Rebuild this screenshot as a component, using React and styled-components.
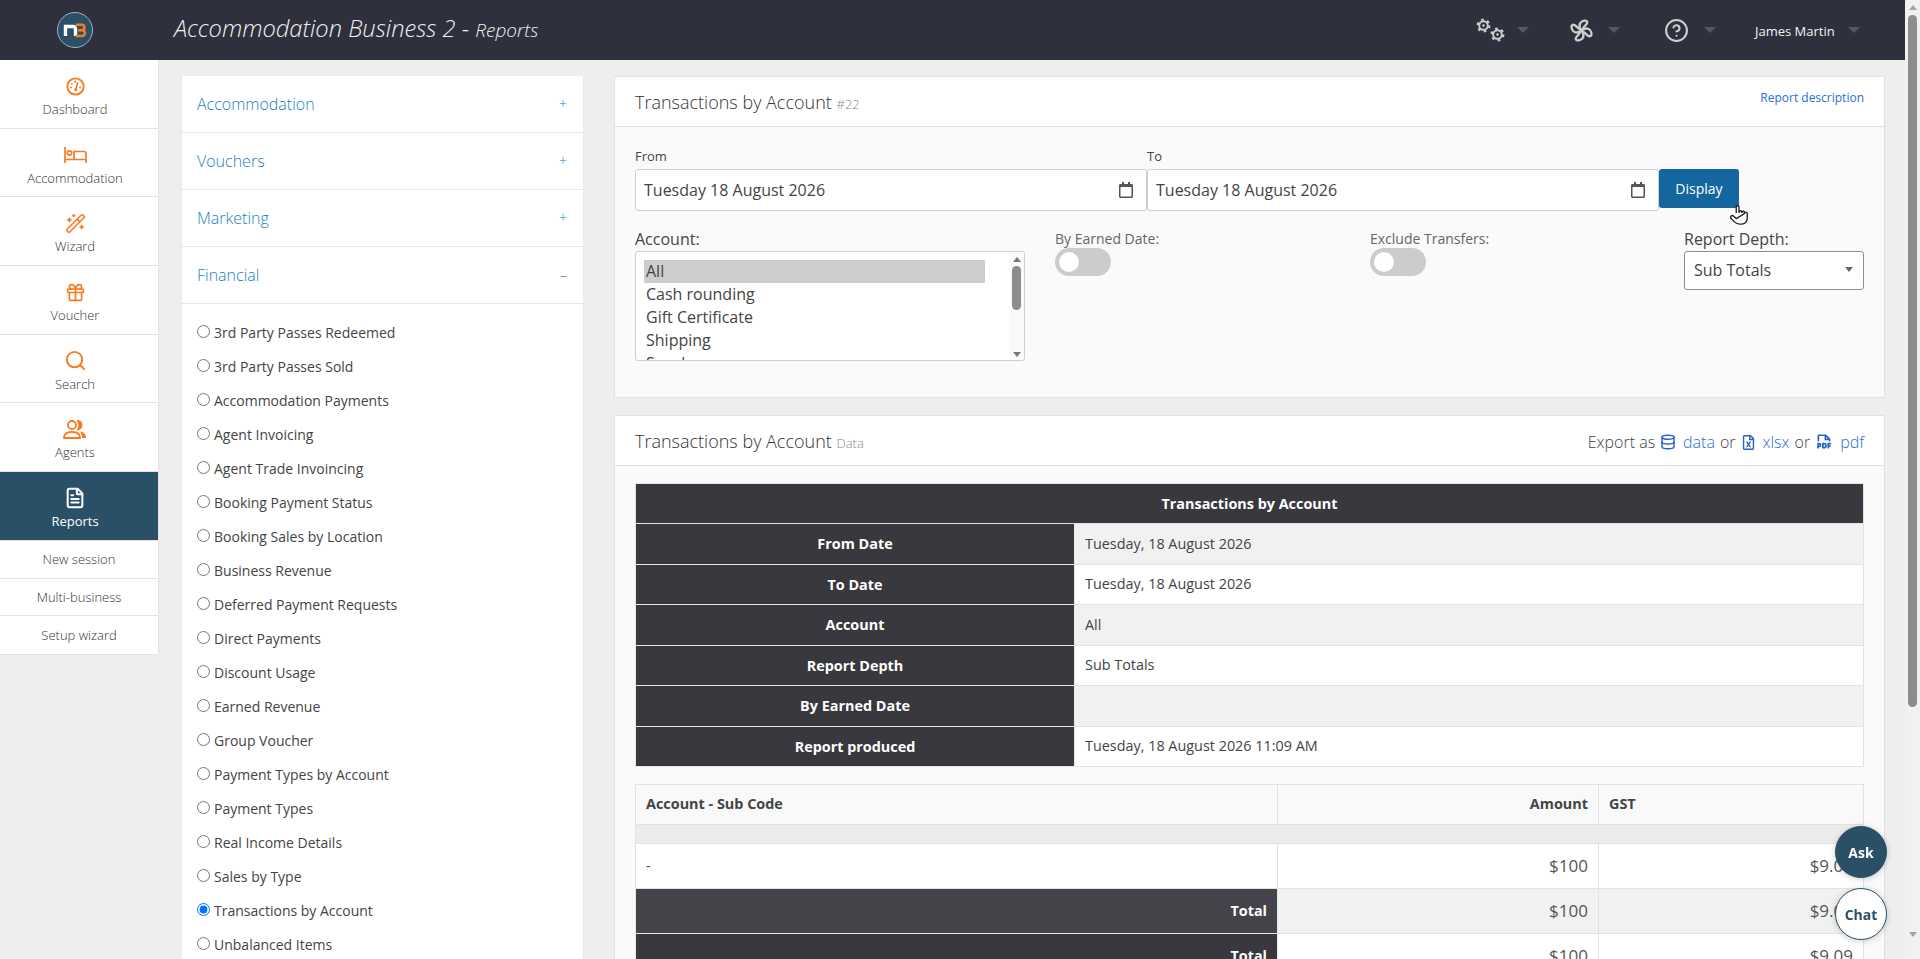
import React from "react"
import styled, { createGlobalStyle } from "styled-components"
import { CircleHelp, Database, FileText, Gift, Search, WandSparkles } from "lucide-react"
import { FaRegCalendar, FaRegFileExcel } from "react-icons/fa"
import { PiFilePdfBold } from "react-icons/pi"

const GlobalStyle = createGlobalStyle`
  html, body {
    margin: 0;
    height: 100%;
    overflow: hidden;
    background: #eeeeee;
    font-family: "Open Sans", "Liberation Sans", sans-serif;
    color: #444;
  }
  * {
    box-sizing: border-box;
  }
`

//  page frame
const Shell = styled.div`
  display: flex;
  height: 959px;
  overflow: hidden;
`

const Page = styled.div`
  flex: 1;
  min-width: 0;
  display: flex;
  flex-direction: column;
`

const ScrollTrack = styled.div`
  width: 15px;
  padding: 0 3px;
  background: #f1f1f1;
  display: flex;
  flex-direction: column;
  align-items: center;
`

const ScrollThumb = styled.div`
  width: 9px;
  height: 692px;
  margin-top: 5px;
  border-radius: 5px;
  background: #8d8d8d;
`

const ArrowUp = styled.div`
  margin-top: ${(p) => p.$top || 5}px;
  border-left: ${(p) => p.$size || 4}px solid transparent;
  border-right: ${(p) => p.$size || 4}px solid transparent;
  border-bottom: 5px solid ${(p) => p.$color || "#a3a3a3"};
`

const ArrowDown = styled.div`
  margin-top: ${(p) => p.$top || 0}px;
  border-left: ${(p) => p.$size || 4}px solid transparent;
  border-right: ${(p) => p.$size || 4}px solid transparent;
  border-top: 5px solid ${(p) => p.$color || "#a3a3a3"};
`

//  top bar
const TopBar = styled.header`
  height: 60px;
  flex: none;
  display: flex;
  align-items: center;
  background: #2e303e;
`

const LogoSlot = styled.div`
  width: 157px;
  padding-left: 57px;
  display: flex;
`

const Title = styled.div`
  margin-left: 17px;
  padding-bottom: 5px;
  font-size: 23.7px;
  font-weight: 300;
  font-style: italic;
  color: #f0f0f0;
  white-space: nowrap;
  small {
    font-size: 19px;
  }
`

const TopTools = styled.div`
  margin-left: auto;
  display: flex;
  align-items: center;
  color: #cfcfcf;
`

const Tool = styled.div`
  width: ${(p) => p.$w}px;
  display: flex;
  align-items: center;
  gap: ${(p) => p.$gap}px;
`

const Gears = styled.div`
  position: relative;
  width: 30px;
  height: 24px;
  svg {
    position: absolute;
  }
  svg:first-child {
    left: 1px;
    top: 0;
  }
  svg:last-child {
    left: 15px;
    top: 9px;
  }
`

const Caret = styled.span`
  border-left: 6px solid transparent;
  border-right: 6px solid transparent;
  border-top: 6px solid #565761;
`

const UserName = styled.span`
  padding-top: 1px;
  font-size: 13px;
  color: #f2f2f2;
  white-space: nowrap;
`

//  content columns
const Columns = styled.div`
  flex: 1;
  min-height: 0;
  display: flex;
  align-items: flex-start;
`

const Sidebar = styled.nav`
  width: 159px;
  flex: none;
  background: #fff;
  border-right: 1px solid #e4e4e4;
  border-bottom: 1px solid #e4e4e4;
`

const NavItem = styled.a`
  height: 68.7px;
  display: flex;
  flex-direction: column;
  align-items: center;
  padding: 16px 8px 0 0;
  gap: 4px;
  font-size: 13px;
  line-height: 18px;
  font-weight: ${(p) => (p.$active ? 400 : 300)};
  color: ${(p) => (p.$active ? "#fff" : "#333")};
  background: ${(p) => (p.$active ? "#2a5068" : "#fff")};
  border-bottom: 1px solid #e6e2e6;
  svg {
    color: ${(p) => (p.$active ? "#fff" : "#f47b20")};
  }
`

const NavIcon = styled.div`
  height: 20px;
  display: flex;
  align-items: center;
  justify-content: center;
`

const SubItem = styled.a`
  height: 37.7px;
  display: flex;
  align-items: center;
  justify-content: center;
  font-size: 13px;
  font-weight: 300;
  color: #333;
  border-bottom: 1px solid #e6e2e6;
  &:last-child {
    border-bottom: 0;
  }
`

const ReportMenu = styled.div`
  width: 403px;
  flex: none;
  margin: 16px 0 0 22px;
  background: #fff;
  border-radius: 2px;
  border: 1px solid #e9e9e9;
  border-width: 0 1px;
`

const MenuHead = styled.div`
  height: 57px;
  display: flex;
  align-items: center;
  justify-content: space-between;
  padding: 0 16px 1px 15px;
  font-size: 16px;
  font-weight: 300;
  color: #1a7fc1;
  border-bottom: 1px solid #e6e6e6;
  span {
    font-size: 14px;
  }
`

const RadioList = styled.div`
  padding-top: 11px;
`

const RadioRow = styled.label`
  height: 34px;
  display: flex;
  align-items: center;
  padding-left: 15px;
  font-size: 14px;
  color: #444;
  input {
    margin: 0 4px 0 0;
    width: 13px;
    height: 13px;
    position: relative;
    top: -1px;
  }
`

const Main = styled.main`
  width: 1271px;
  flex: none;
  margin: 16px 0 0 30px;
  display: flex;
  flex-direction: column;
  gap: 17px;
`

const Card = styled.section`
  background: #fafafa;
  border: 1px solid #e2e2e2;
`

const CardHead = styled.div`
  height: 50px;
  padding: 0 20px;
  display: flex;
  align-items: center;
  justify-content: space-between;
  background: #fff;
  border-bottom: 1px solid #e2e2e2;
`

const CardTitle = styled.div`
  font-size: 18px;
  font-weight: 300;
  color: #333;
  small {
    font-size: 13px;
    color: #888;
  }
`

const DescLink = styled.a`
  font-size: 12px;
  color: #2a6fd6;
  align-self: flex-start;
  margin-top: 12px;
`

const CardBody = styled.div`
  padding: ${(p) => p.$pad};
`

//  report form
const DateRow = styled.div`
  display: flex;
  align-items: flex-start;
`

const DateField = styled.div`
  width: ${(p) => p.$w}px;
  label {
    display: block;
    height: 22px;
    line-height: 18px;
    font-size: 13px;
    color: #444;
  }
`

const DateInput = styled.div`
  height: 42px;
  display: flex;
  align-items: center;
  justify-content: space-between;
  padding: 0 12px 0 8px;
  font-size: 16px;
  color: #444;
  background: #fff;
  border: 1px solid #cfcfcf;
  border-radius: 3px;
  svg {
    color: #555;
  }
`

const DisplayButton = styled.button`
  position: relative;
  width: 80px;
  height: 39px;
  margin-top: 22px;
  border: 0;
  border-radius: 3px;
  background: #14679e;
  color: #fff;
  font: 14px "Open Sans", sans-serif;
`

const HandCursor = styled.svg`
  position: absolute;
  left: 69px;
  top: 32px;
`

const FilterRow = styled.div`
  margin-top: 17px;
  display: grid;
  grid-template-columns: 420px 315px 314px 180px;
`

const BigLabel = styled.div`
  height: 23px;
  font-size: 16px;
  line-height: 22px;
  color: #444;
`

const SmallLabel = styled.div`
  padding-top: 2px;
  height: 20px;
  font-size: 14px;
  line-height: 18px;
  color: #666;
`

const ListBox = styled.div`
  width: 390px;
  height: 110px;
  padding: 8px 0 0 8px;
  display: flex;
  justify-content: space-between;
  overflow: hidden;
  background: #fff;
  border: 1px solid #cfcfcf;
  border-radius: 3px;
`

const Options = styled.div`
  width: 341px;
`

const Option = styled.div`
  height: 23px;
  padding-left: 2px;
  font-size: 16px;
  line-height: 23px;
  color: #444;
  background: ${(p) => (p.$selected ? "#cdcdcd" : "transparent")};
`

const ListScroll = styled.div`
  width: 15px;
  height: 108px;
  margin-top: -8px;
  display: flex;
  flex-direction: column;
  align-items: center;
  background: #fafafa;
`

const ListThumb = styled.div`
  width: 9px;
  height: 44px;
  margin-top: 4px;
  border-radius: 5px;
  background: #8d8d8d;
`

const Toggle = styled.div`
  width: 56px;
  height: 28px;
  padding: 4px;
  border-radius: 14px;
  background: #cccccc;
  &::before {
    content: "";
    display: block;
    width: 20px;
    height: 20px;
    border-radius: 50%;
    background: #fff;
  }
`

const DepthSelect = styled.div`
  width: 180px;
  height: 39px;
  display: flex;
  align-items: center;
  justify-content: space-between;
  padding: 0 10px 2px 9px;
  font-size: 16px;
  color: #444;
  background: #fff;
  border: 1px solid #8e8e8e;
  border-radius: 3px;
`

//  export links
const ExportLinks = styled.div`
  display: flex;
  align-items: center;
  padding-top: 3px;
  font-size: 16px;
  font-weight: 300;
  color: #444;
  white-space: nowrap;
`

const ExportLink = styled.a`
  display: flex;
  align-items: center;
  gap: 7px;
  margin: 0 5px 0 5px;
  color: #2a6fd6;
  svg {
    color: #2563c9;
  }
  &:last-child {
    margin-right: 0;
  }
`

//  report tables
const Table = styled.table`
  width: 1229px;
  table-layout: fixed;
  border-collapse: collapse;
  font-size: 14.4px;
  margin-bottom: 17px;
  th,
  td {
    padding-bottom: 2px;
  }
`

const Row = styled.tr`
  height: ${(p) => p.$h}px;
`

const SummaryHead = styled.th`
  background: #39383e;
  color: #fff;
  font-weight: 700;
  border: 1px solid #e2e2e2;
`

const SummaryLabel = styled.th`
  background: #39383e;
  color: #fff;
  font-weight: 700;
  border: 1px solid #e8e8e8;
`

const SummaryValue = styled.td`
  padding: 0 10px;
  color: #444;
  background: ${(p) => (p.$alt ? "#f1f1f1" : "#fff")};
  border: 1px solid #e2e2e2;
`

const HeadCell = styled.th`
  padding: 0 10px;
  text-align: ${(p) => p.$align || "left"};
  background: #f9f9f9;
  font-weight: 700;
  color: #444;
  border: 1px solid #e2e2e2;
`

const SpacerCell = styled.td`
  background: #ececec;
  border: 1px solid #e2e2e2;
`

const ValueCell = styled.td`
  padding: 0 10px;
  text-align: right;
  font-size: 17px;
  color: #555;
  background: ${(p) => (p.$alt ? "#f1f1f1" : "#fff")};
  border: 1px solid #e2e2e2;
`

const NameCell = styled.td`
  padding: 0 10px;
  background: #fff;
  color: #444;
  border: 1px solid #e2e2e2;
`

const TotalCell = styled.th`
  padding: 0 10px;
  text-align: right;
  color: #fff;
  font-weight: 700;
  background: ${(p) => (p.$light ? "#444349" : "#39383e")};
  border: 1px solid #e8e8e8;
`

//  floating help buttons
const FloatButton = styled.div`
  position: fixed;
  left: 1835px;
  top: ${(p) => p.$top}px;
  width: 52px;
  height: 52px;
  display: flex;
  align-items: center;
  justify-content: center;
  border-radius: 50%;
  font-size: 14px;
  font-weight: 700;
  color: ${(p) => (p.$solid ? "#fff" : "#2a5068")};
  background: ${(p) => (p.$solid ? "#2a5068" : "#fff")};
  border: 1px solid #2a5068;
  box-shadow: 0 1px 6px rgba(0, 0, 0, 0.2);
`

const Logo = () => (
  <svg width="36" height="42" viewBox="0 0 36 42">
    <circle cx="18" cy="21" r="17.5" fill="#2a5068" stroke="#9fb3bf" />
    <path d="M8.5 27V17.5H16a2.5 2.5 0 0 1 2.5 2.5V27" fill="none" stroke="#fff" strokeWidth="3.4" />
    <path
      d="M18.5 15.8h6.2a2.7 2.7 0 0 1 0 5.4h-3.6M21.1 21.2h4a2.9 2.9 0 0 1 0 5.8h-6.6"
      fill="none"
      stroke="#f47b20"
      strokeWidth="2.6"
    />
  </svg>
)

const Gear = () => (
  <svg width="15" height="15" viewBox="0 0 15 15" fill="none" stroke="currentColor">
    <circle cx="7.5" cy="7.5" r="4.3" strokeWidth="1.9" />
    <circle cx="7.5" cy="7.5" r="5.9" strokeWidth="2.2" strokeDasharray="2.6 3.58" />
    <circle cx="7.5" cy="7.5" r="1" fill="currentColor" strokeWidth="0.6" />
  </svg>
)

const Pinwheel = () => (
  <svg width="23" height="23" viewBox="0 0 24 24" fill="none" stroke="currentColor" strokeWidth="2.4" strokeLinejoin="round">
    {[0, 90, 180, 270].map((angle) => (
      <path
        key={angle}
        transform={`rotate(${angle} 12 12)`}
        d="M12 12c-1.6-2-2.6-4.4-1.8-6.8C11 3 13.800 1.500 16 1.600c1.700.1 2.400 1.300 1.800 2.700C16.900 6.600 14 8 13.400 10.500"
      />
    ))}
    <circle cx="12" cy="12" r="1" fill="currentColor" strokeWidth="0.8" />
  </svg>
)

const GaugeIcon = () => (
  <svg width="19" height="19" viewBox="0 0 20 20" fill="none" stroke="currentColor" strokeWidth="2">
    <circle cx="10" cy="10" r="8.6" />
    <path d="M10.6 12.4 12.4 5.6" strokeWidth="1.7" />
    <circle cx="10.3" cy="13.2" r="1.6" fill="currentColor" stroke="none" />
    <g fill="currentColor" stroke="none">
      <circle cx="5.2" cy="11" r="1" />
      <circle cx="6.2" cy="7" r="1" />
      <circle cx="9.6" cy="5" r="1" />
      <circle cx="14.8" cy="11" r="1" />
    </g>
  </svg>
)

const BedIcon = () => (
  <svg width="23" height="16" viewBox="0 0 23 16" fill="none" stroke="currentColor" strokeWidth="1.7">
    <path d="M1 0v16M1 12.5h21M22 16V6.500a2 2 0 0 0-2-2H10v8" />
    <circle cx="5.5" cy="6" r="2.2" />
  </svg>
)

const AgentsIcon = () => (
  <svg width="24" height="19" viewBox="0 0 24 19" fill="none" stroke="currentColor" strokeWidth="1.8">
    <circle cx="9" cy="5" r="4" />
    <path d="M1 18c0-4 3-6 8-6s8 2 8 6z" />
    <path d="M15 .8a4.4 4.4 0 0 1 0 8.6c1.4-2.6 1.4-6 0-8.6z" fill="currentColor" />
    <path d="M17 11.6c3.5.3 6 2.4 6 6.4h-4c0-2.6-.6-4.6-2-6.4z" fill="currentColor" stroke="none" />
  </svg>
)

const navItems = [
  { label: "Dashboard", icon: <GaugeIcon /> },
  { label: "Accommodation", icon: <BedIcon /> },
  { label: "Wizard", icon: <WandSparkles size={21} strokeWidth={1.8} /> },
  { label: "Voucher", icon: <Gift size={21} strokeWidth={1.9} /> },
  { label: "Search", icon: <Search size={23} strokeWidth={2} /> },
  { label: "Agents", icon: <AgentsIcon /> },
  { label: "Reports", icon: <FileText size={22} strokeWidth={2.2} />, active: true },
]

const reports = [
  "3rd Party Passes Redeemed",
  "3rd Party Passes Sold",
  "Accommodation Payments",
  "Agent Invoicing",
  "Agent Trade Invoincing",
  "Booking Payment Status",
  "Booking Sales by Location",
  "Business Revenue",
  "Deferred Payment Requests",
  "Direct Payments",
  "Discount Usage",
  "Earned Revenue",
  "Group Voucher",
  "Payment Types by Account",
  "Payment Types",
  "Real Income Details",
  "Sales by Type",
  "Transactions by Account",
  "Unbalanced Items",
]

const summary = [
  ["From Date", "Tuesday, 18 August 2026"],
  ["To Date", "Tuesday, 18 August 2026"],
  ["Account", "All"],
  ["Report Depth", "Sub Totals"],
  ["By Earned Date", ""],
  ["Report produced", "Tuesday, 18 August 2026 11:09 AM"],
]

const App = () => {
  return (
    <Shell>
      <GlobalStyle />
      <Page>
        <TopBar>
          <LogoSlot>
            <Logo />
          </LogoSlot>
          <Title>
            Accommodation Business 2 - <small>Reports</small>
          </Title>
          <TopTools>
            <Tool $w={95} $gap={12}>
              <Gears>
                <Gear />
                <Gear />
              </Gears>
              <Caret />
            </Tool>
            <Tool $w={94} $gap={15}>
              <Pinwheel />
              <Caret />
            </Tool>
            <Tool $w={91} $gap={15}>
              <CircleHelp size={25} strokeWidth={2} />
              <Caret />
            </Tool>
            <Tool $w={150} $gap={13}>
              <UserName>James Martin</UserName>
              <Caret />
            </Tool>
          </TopTools>
        </TopBar>

        <Columns>
          <Sidebar>
            {navItems.map((item) => (
              <NavItem key={item.label} $active={item.active}>
                <NavIcon>{item.icon}</NavIcon>
                {item.label}
              </NavItem>
            ))}
            <SubItem>New session</SubItem>
            <SubItem>Multi-business</SubItem>
            <SubItem>Setup wizard</SubItem>
          </Sidebar>

          <ReportMenu>
            <MenuHead>
              Accommodation<span>+</span>
            </MenuHead>
            <MenuHead>
              Vouchers<span>+</span>
            </MenuHead>
            <MenuHead>
              Marketing<span>+</span>
            </MenuHead>
            <MenuHead>
              Financial<span>–</span>
            </MenuHead>
            <RadioList>
              {reports.map((name) => (
                <RadioRow key={name}>
                  <input type="radio" name="report" defaultChecked={name === "Transactions by Account"} />
                  {name}
                </RadioRow>
              ))}
            </RadioList>
          </ReportMenu>

          <Main>
            <Card>
              <CardHead>
                <CardTitle>
                  Transactions by Account <small>#22</small>
                </CardTitle>
                <DescLink>Report description</DescLink>
              </CardHead>
              <CardBody $pad="20px 20px 36px">
                <DateRow>
                  <DateField $w={512}>
                    <label>From</label>
                    <DateInput>
                      Tuesday 18 August 2026
                      <FaRegCalendar size={16} />
                    </DateInput>
                  </DateField>
                  <DateField $w={512}>
                    <label>To</label>
                    <DateInput>
                      Tuesday 18 August 2026
                      <FaRegCalendar size={16} />
                    </DateInput>
                  </DateField>
                  <DisplayButton>
                    Display
                    <HandCursor width="22" height="26" viewBox="0 0 24 24" fill="#fff" stroke="#222" strokeWidth="1.5">
                      <path d="M9 11V4.5a1.5 1.5 0 0 1 3 0V11m0-1a1.5 1.5 0 0 1 3 0v1m0-.5a1.5 1.5 0 0 1 3 0V12m0-.5a1.5 1.5 0 0 1 3 0V17a6 6 0 0 1-6 6h-2c-2.8 0-4.5-.9-6-2.4L3.4 17c-.8-.9-.7-2.2 0-2.8.8-.7 2-.6 2.8.2L9 17z" />
                    </HandCursor>
                  </DisplayButton>
                </DateRow>
                <FilterRow>
                  <div>
                    <BigLabel>Account:</BigLabel>
                    <ListBox>
                      <Options>
                        <Option $selected>All</Option>
                        <Option>Cash rounding</Option>
                        <Option>Gift Certificate</Option>
                        <Option>Shipping</Option>
                        <Option>Snack</Option>
                      </Options>
                      <ListScroll>
                        <ArrowUp $color="#777" />
                        <ListThumb />
                        <ArrowDown $color="#777" $top={42} />
                      </ListScroll>
                    </ListBox>
                  </div>
                  <div>
                    <SmallLabel>By Earned Date:</SmallLabel>
                    <Toggle />
                  </div>
                  <div>
                    <SmallLabel>Exclude Transfers:</SmallLabel>
                    <Toggle />
                  </div>
                  <div>
                    <BigLabel>Report Depth:</BigLabel>
                    <DepthSelect>
                      Sub Totals
                      <ArrowDown $color="#666" />
                    </DepthSelect>
                  </div>
                </FilterRow>
              </CardBody>
            </Card>

            <Card>
              <CardHead>
                <CardTitle>
                  Transactions by Account <small>Data</small>
                </CardTitle>
                <ExportLinks>
                  Export as
                  <ExportLink>
                    <Database size={16} strokeWidth={2.2} />
                    data
                  </ExportLink>
                  or
                  <ExportLink>
                    <FaRegFileExcel size={15} />
                    xlsx
                  </ExportLink>
                  or
                  <ExportLink>
                    <PiFilePdfBold size={18} />
                    pdf
                  </ExportLink>
                </ExportLinks>
              </CardHead>
              <CardBody $pad="17px 20px 0">
                <Table>
                  <colgroup>
                    <col width="439" />
                    <col />
                  </colgroup>
                  <tbody>
                    <Row $h={40}>
                      <SummaryHead colSpan={2}>Transactions by Account</SummaryHead>
                    </Row>
                    {summary.map(([label, value], i) => (
                      <Row key={label} $h={i % 2 ? 40 : 41}>
                        <SummaryLabel>{label}</SummaryLabel>
                        <SummaryValue $alt={i % 2 === 0}>{value}</SummaryValue>
                      </Row>
                    ))}
                  </tbody>
                </Table>
                <Table>
                  <colgroup>
                    <col width="642" />
                    <col width="321" />
                    <col />
                  </colgroup>
                  <tbody>
                    <Row $h={40}>
                      <HeadCell>Account - Sub Code</HeadCell>
                      <HeadCell $align="right">Amount</HeadCell>
                      <HeadCell>GST</HeadCell>
                    </Row>
                    <Row $h={19}>
                      <SpacerCell colSpan={3} />
                    </Row>
                    <Row $h={45}>
                      <NameCell>-</NameCell>
                      <ValueCell>$100</ValueCell>
                      <ValueCell>$9.09</ValueCell>
                    </Row>
                    <Row $h={45}>
                      <TotalCell $light>Total</TotalCell>
                      <ValueCell $alt>$100</ValueCell>
                      <ValueCell $alt>$9.09</ValueCell>
                    </Row>
                    <Row $h={45}>
                      <TotalCell>Total</TotalCell>
                      <ValueCell>$100</ValueCell>
                      <ValueCell>$9.09</ValueCell>
                    </Row>
                  </tbody>
                </Table>
              </CardBody>
            </Card>
          </Main>
        </Columns>
      </Page>
      <ScrollTrack>
        <ArrowUp />
        <ScrollThumb />
        <ArrowDown $top={225} />
      </ScrollTrack>
      <FloatButton $solid $top={826}>
        Ask
      </FloatButton>
      <FloatButton $top={888}>Chat</FloatButton>
    </Shell>
  )
}

export default App
